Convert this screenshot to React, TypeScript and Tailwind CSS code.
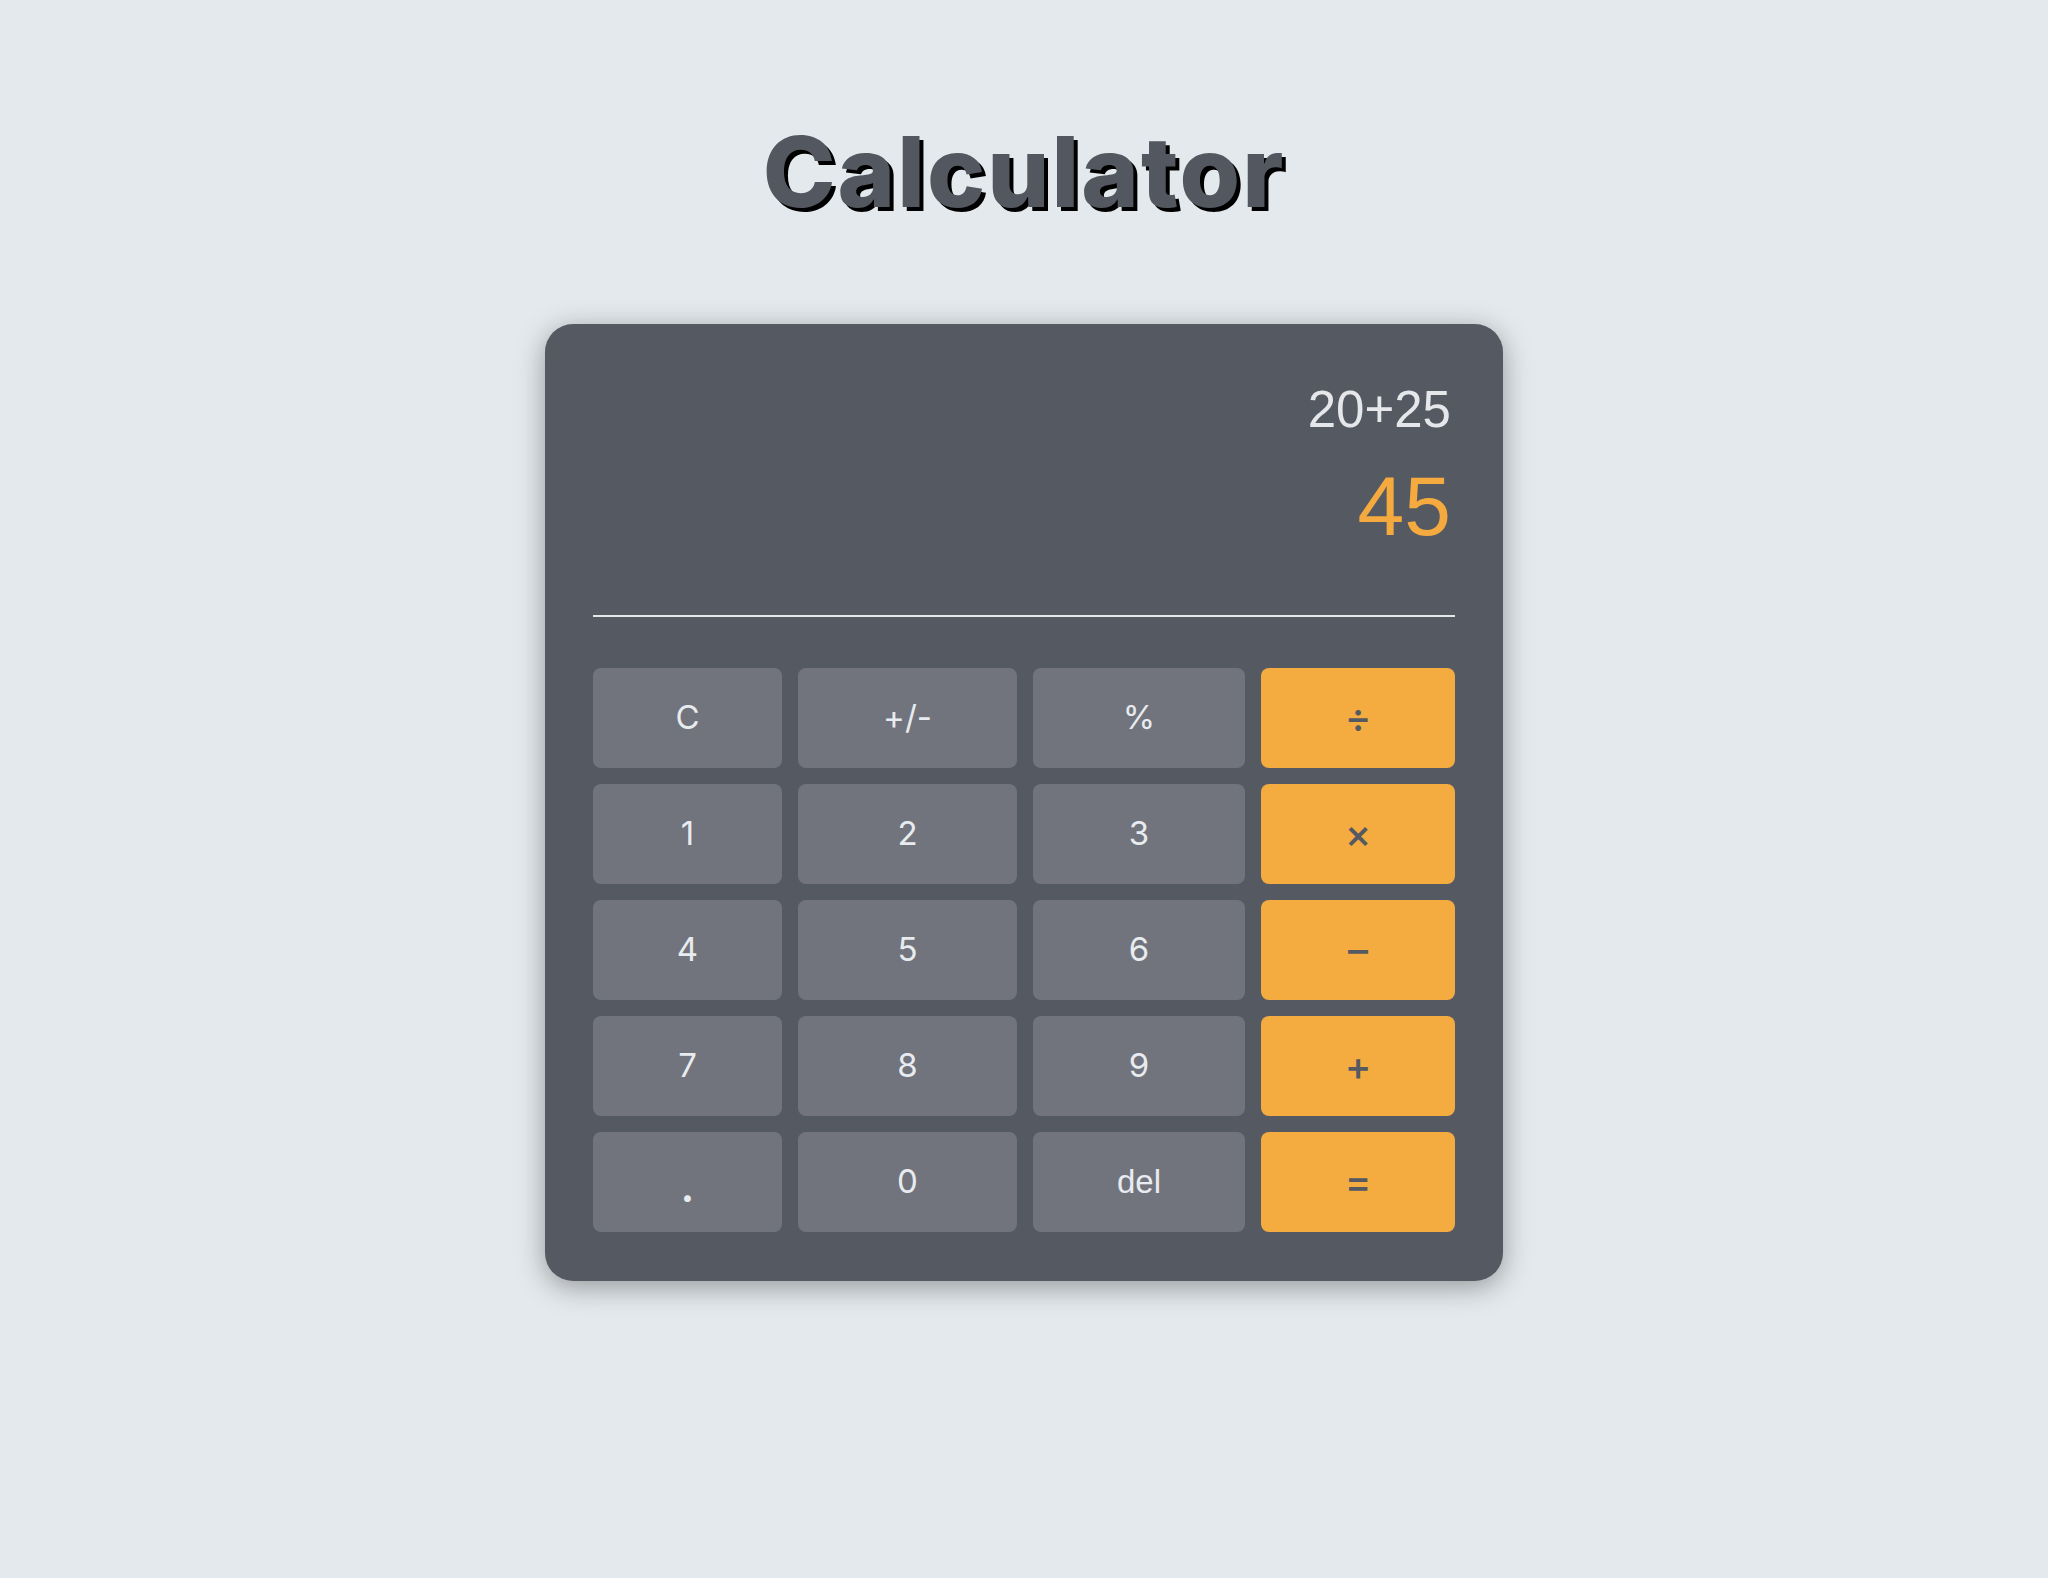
import React from 'react';

type Key = { label: string; op?: boolean; arial?: boolean; dot?: boolean };

const keys: Key[] = [
  { label: 'C' },
  { label: '+/-' },
  { label: '%' },
  { label: '÷', op: true },
  { label: '1' },
  { label: '2' },
  { label: '3' },
  { label: '×', op: true },
  { label: '4' },
  { label: '5' },
  { label: '6' },
  { label: '–', op: true },
  { label: '7' },
  { label: '8' },
  { label: '9' },
  { label: '+', op: true },
  { label: '.', dot: true },
  { label: '0' },
  { label: 'del', arial: true },
  { label: '=', op: true },
];

export default function App() {
  return (
    <div className="min-h-screen bg-[#e4e9ed] flex flex-col items-center">
      {/* Title */}
      <h1 className="mt-[123px] text-[98px] leading-none font-extrabold tracking-[2px] text-[#53575f] font-['Inter',sans-serif] [text-shadow:4px_4px_0_#000]">
        Calculator
      </h1>

      {/* Calculator card */}
      <div className="mt-[103px] w-[958px] rounded-[28px] bg-[#555961] px-12 pt-12 pb-[49px] shadow-[0_6px_28px_rgba(0,0,0,0.35)]">
        {/* Display */}
        <div className="flex flex-col items-end pr-1 pb-[67px] border-b-2 border-[#e5e7eb] font-['Liberation_Sans',Arial,sans-serif]">
          <div className="mt-3 text-[51px] leading-none text-[#e5e7eb]">20+25</div>
          <div className="mt-[29px] text-[84px] leading-none text-[#f4aa3f]">45</div>
        </div>

        {/* Keypad */}
        <div className="mt-[51px] grid grid-cols-[189fr_219fr_212fr_194fr] auto-rows-[100px] gap-4">
          {keys.map((k) => (
            <button
              key={k.label}
              className={`rounded-lg flex items-center justify-center ${
                k.arial
                  ? "text-[33px] font-['Liberation_Sans',Arial,sans-serif]"
                  : k.op
                  ? "text-[40px] font-medium font-['Inter',sans-serif]"
                  : k.dot
                  ? "text-[40px] font-bold font-['Inter',sans-serif] pt-3"
                  : "text-[33px] font-normal font-['Inter',sans-serif]"
              } ${k.op ? 'bg-[#f4ab40] text-[#555961]' : 'bg-[#71747c] text-[#e8ebef]'}`}
            >
              {k.label}
            </button>
          ))}
        </div>
      </div>
    </div>
  );
}
